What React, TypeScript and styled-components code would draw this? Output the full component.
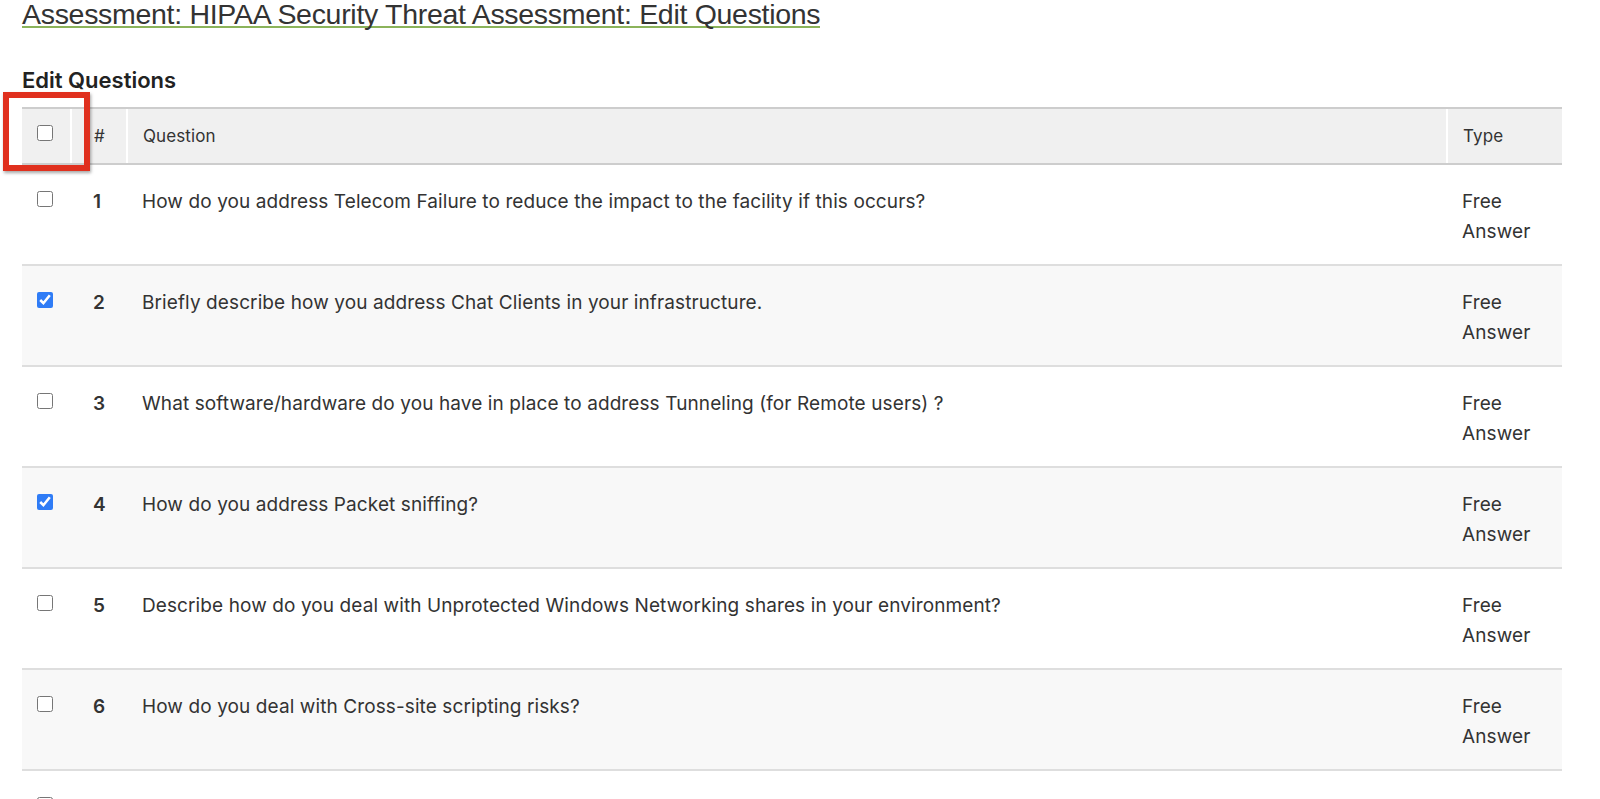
import { FC } from "react";
import styled, { createGlobalStyle } from "styled-components";

const GlobalStyle = createGlobalStyle`
  html, body {
    overflow: hidden;
  }
  body {
    margin: 0;
    background: #fff;
    font-family: Inter, "Liberation Sans", Arial, sans-serif;
    color: #333;
  }
`;

const Page = styled.div`
  padding: 0 38px 0 22px;
`;

const Title = styled.h1`
  display: inline-block;
  margin: 0;
  padding-top: 2px;
  font-family: "Liberation Sans", Arial, sans-serif;
  font-size: 28.5px;
  font-weight: normal;
  line-height: 24px;
  color: #333;
  border-bottom: 2px solid #8bb35a;
  letter-spacing: -0.3px;
`;

const SubTitle = styled.h2`
  margin: 40px 0 15px;
  font-size: 22px;
  line-height: 24px;
  font-weight: 600;
  color: #222;
`;

const TableWrap = styled.div`
  position: relative;
`;

const Table = styled.table`
  width: 100%;
  border-collapse: collapse;
  font-size: 19px;
  letter-spacing: 0.1px;
`;

const HeadCell = styled.th<{ $w?: number }>`
  width: ${(p) => (p.$w ? `${p.$w}px` : "auto")};
  box-sizing: border-box;
  height: 56px;
  padding: 0 15px;
  text-align: left;
  font-size: 17px;
  font-weight: normal;
  color: #333;
  background: #f0f0f0;
  border-top: 2px solid #cdcdcd;
  border-bottom: 2px solid #cdcdcd;
  border-left: 2px solid #fff;
  &:first-child {
    border-left: none;
    padding: 0 3px 0 0;
  }
`;

const NumHeadCell = styled(HeadCell)`
  padding-left: 22px;
`;

const Row = styled.tr<{ $striped: boolean }>`
  background: ${(p) => (p.$striped ? "#f8f8f8" : "#fff")};
  border-bottom: 2px solid #dedede;
`;

const Cell = styled.td<{ $bold?: boolean }>`
  vertical-align: top;
  padding: 22px 15px 17px;
  line-height: 30px;
  font-weight: ${(p) => (p.$bold ? 600 : "normal")};
  color: #333;
`;

const NumCell = styled(Cell)`
  padding-left: 22px;
`;

const BoxCell = styled.td`
  vertical-align: top;
  padding: 26px 3px 0 0;
`;

const Check = styled.input.attrs({ type: "checkbox" })`
  display: block;
  width: 16px;
  height: 16px;
  margin: 0 auto;
  accent-color: #2f7cf6;
`;

const HeadCheck = styled(Check)`
  margin-bottom: 7px;
`;

const Highlight = styled.div`
  position: absolute;
  left: -19px;
  top: -15px;
  width: 87px;
  height: 79px;
  box-sizing: border-box;
  border: 6px solid #e0301e;
  box-shadow: 1px 2px 3px rgba(0, 0, 0, 0.35);
  pointer-events: none;
`;

type Question = { n: number; text: string; checked: boolean };

const questions: Question[] = [
  { n: 1, text: "How do you address Telecom Failure to reduce the impact to the facility if this occurs?", checked: false },
  { n: 2, text: "Briefly describe how you address Chat Clients in your infrastructure.", checked: true },
  { n: 3, text: "What software/hardware do you have in place to address Tunneling (for Remote users) ?", checked: false },
  { n: 4, text: "How do you address Packet sniffing?", checked: true },
  { n: 5, text: "Describe how do you deal with Unprotected Windows Networking shares in your environment?", checked: false },
  { n: 6, text: "How do you deal with Cross-site scripting risks?", checked: false },
  { n: 7, text: "Describe how you address Mobile code (Java/JavaScript/ActiveX) vulnerabilities?", checked: false },
];

const App: FC = () => {
  return (
    <>
      <GlobalStyle />
      <Page>
        <Title>Assessment: HIPAA Security Threat Assessment: Edit Questions</Title>
        <SubTitle>Edit Questions</SubTitle>
        <TableWrap>
          <Table>
            <thead>
              <tr>
                <HeadCell $w={49}>
                  <HeadCheck />
                </HeadCell>
                <NumHeadCell $w={56}>#</NumHeadCell>
                <HeadCell>Question</HeadCell>
                <HeadCell $w={115}>Type</HeadCell>
              </tr>
            </thead>
            <tbody>
              {questions.map((q) => (
                <Row key={q.n} $striped={q.n % 2 === 0}>
                  <BoxCell>
                    <Check defaultChecked={q.checked} />
                  </BoxCell>
                  <NumCell $bold>{q.n}</NumCell>
                  <Cell>{q.text}</Cell>
                  <Cell>
                    Free
                    <br />
                    Answer
                  </Cell>
                </Row>
              ))}
            </tbody>
          </Table>
          <Highlight />
        </TableWrap>
      </Page>
    </>
  );
};

export default App;
